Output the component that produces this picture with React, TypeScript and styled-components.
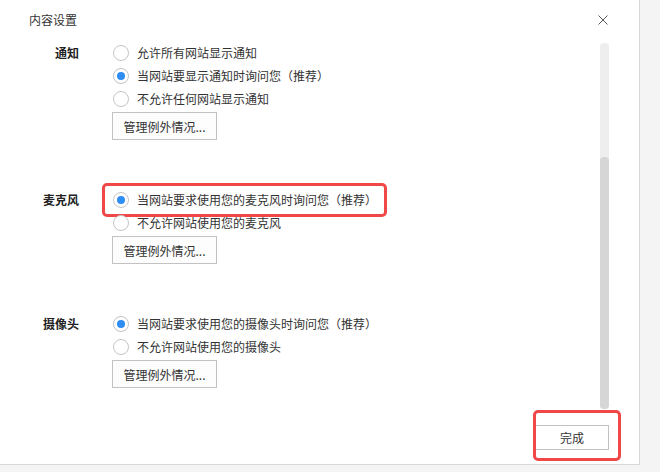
import styled, { createGlobalStyle } from 'styled-components'

const GlobalStyle = createGlobalStyle`
  html, body {
    margin: 0;
    padding: 0;
    background: #f4f4f4;
    font-family: "Noto Sans CJK SC", "Liberation Sans", sans-serif;
    font-size: 12px;
    color: #333;
  }
`

const Dialog = styled.div`
  width: 639px;
  height: 464px;
  background: #fff;
  border-right: 1px solid #d8d8d8;
  border-bottom: 1px solid #d8d8d8;
  display: flex;
  flex-direction: column;
`

const Header = styled.div`
  height: 40px;
  display: flex;
  align-items: center;
  justify-content: space-between;
  padding: 0 31px 0 29px;
  box-sizing: border-box;
  .title {
    font-size: 12px;
    color: #333;
    line-height: 16px;
  }
`

const CloseButton = styled.button`
  border: none;
  background: none;
  padding: 0;
  width: 10px;
  height: 10px;
  display: flex;
  cursor: pointer;
`

const Body = styled.div`
  display: flex;
  height: 369px;
`

const Content = styled.div`
  flex: 1;
  display: flex;
  flex-direction: column;
  gap: 48px;
  padding-top: 1px;
`

const Track = styled.div`
  width: 9px;
  margin: 3px 30px 0 0;
  height: 366px;
  background: #eeeeee;
  border-radius: 4px;
  display: flex;
  flex-direction: column;
  justify-content: flex-end;
`

const Thumb = styled.div<{ $size: number }>`
  height: ${p => p.$size}px;
  background: #d6d6d6;
  border-radius: 4px;
`

const Section = styled.div`
  display: grid;
  grid-template-columns: 79px 1fr;
  column-gap: 33px;
`

const Label = styled.div`
  text-align: right;
  font-weight: bold;
  line-height: 23px;
  color: #222;
`

const Options = styled.div`
  display: flex;
  flex-direction: column;
  align-items: flex-start;
`

const Option = styled.label<{ $highlight?: boolean }>`
  position: relative;
  display: flex;
  align-items: center;
  height: 23px;
  gap: 8px;
  padding-left: 1px;
  cursor: pointer;
  white-space: nowrap;

  ${p =>
    p.$highlight &&
    `
    &::after {
      content: '';
      position: absolute;
      left: -10px;
      top: -5px;
      right: -10px;
      bottom: -6px;
      border: 3px solid #f04848;
      border-radius: 5px;
      pointer-events: none;
    }
  `}
`

const Radio = styled.span<{ $checked?: boolean }>`
  width: 14px;
  height: 14px;
  border: 1px solid #c4c4c4;
  border-radius: 50%;
  background: #fff;
  display: flex;
  align-items: center;
  justify-content: center;
  flex: none;

  &::after {
    content: '';
    width: 8px;
    height: 8px;
    border-radius: 50%;
    background: ${p => (p.$checked ? '#2e8df5' : 'transparent')};
  }
`

const Button = styled.button`
  font-family: inherit;
  font-size: 12px;
  color: #333;
  background: #fdfdfd;
  border: 1px solid #c2c2c2;
  height: 28px;
  padding: 0;
  cursor: pointer;
`

const ManageButton = styled(Button)`
  width: 105px;
  margin-top: 2px;
`

const Footer = styled.div`
  display: flex;
  justify-content: flex-end;
  padding: 16px 30px 0 0;
`

const DoneWrap = styled.div`
  position: relative;

  &::after {
    content: '';
    position: absolute;
    left: -2px;
    top: -15px;
    right: -12px;
    bottom: -11px;
    border: 3px solid #f04848;
    border-radius: 5px;
    pointer-events: none;
  }
`

const DoneButton = styled(Button)`
  width: 74px;
  height: 25px;
  background: #fff;
`

type Setting = {
  label: string
  options: { text: string; checked?: boolean; highlight?: boolean }[]
}

const settings: Setting[] = [
  {
    label: '通知',
    options: [
      { text: '允许所有网站显示通知' },
      { text: '当网站要显示通知时询问您（推荐）', checked: true },
      { text: '不允许任何网站显示通知' },
    ],
  },
  {
    label: '麦克风',
    options: [
      { text: '当网站要求使用您的麦克风时询问您（推荐）', checked: true, highlight: true },
      { text: '不允许网站使用您的麦克风' },
    ],
  },
  {
    label: '摄像头',
    options: [
      { text: '当网站要求使用您的摄像头时询问您（推荐）', checked: true },
      { text: '不允许网站使用您的摄像头' },
    ],
  },
]

function App() {
  return (
    <>
      <GlobalStyle />
      <Dialog>
        <Header>
          <span className="title">内容设置</span>
          <CloseButton aria-label="关闭">
            <svg width="10" height="10" viewBox="0 0 10 10">
              <path d="M0.5 0.5L9.5 9.5M9.5 0.5L0.5 9.5" stroke="#555" strokeWidth="1" fill="none" />
            </svg>
          </CloseButton>
        </Header>
        <Body>
          <Content>
            {settings.map(s => (
              <Section key={s.label}>
                <Label>{s.label}</Label>
                <Options>
                  {s.options.map(o => (
                    <Option key={o.text} $highlight={o.highlight}>
                      <Radio $checked={o.checked} />
                      {o.text}
                    </Option>
                  ))}
                  <ManageButton>管理例外情况...</ManageButton>
                </Options>
              </Section>
            ))}
          </Content>
          <Track>
            <Thumb $size={252} />
          </Track>
        </Body>
        <Footer>
          <DoneWrap>
            <DoneButton>完成</DoneButton>
          </DoneWrap>
        </Footer>
      </Dialog>
    </>
  )
}

export default App
